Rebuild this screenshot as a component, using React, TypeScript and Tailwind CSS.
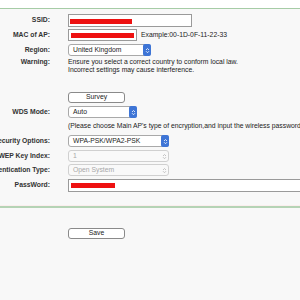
import React from "react";

function Arrows({ disabled }: { disabled?: boolean }) {
  const color = disabled ? "#b5b5b5" : "#ffffff";
  return (
    <svg width="5" height="7" viewBox="0 0 5 7">
      <path d="M1 3 L2.5 1.5 L4 3" fill="none" stroke={color} strokeWidth="0.8" />
      <path d="M1 4.2 L2.5 5.7 L4 4.2" fill="none" stroke={color} strokeWidth="0.8" />
    </svg>
  );
}

function Select({ value, width, disabled }: { value: string; width: string; disabled?: boolean }) {
  return (
    <div
      className={`flex h-full items-center justify-between rounded-[3px] border pl-[4px] ${width} ${
        disabled ? "border-[#d0d0d0] bg-[#f9f9f9] text-[#a8a8a8]" : "border-[#a9a9a9] bg-white text-[#222]"
      }`}
    >
      <span>{value}</span>
      {disabled ? (
        <span className="flex h-full w-[8px] items-center justify-center">
          <Arrows disabled />
        </span>
      ) : (
        <span className="flex h-[calc(100%+2px)] w-[8px] items-center justify-center rounded-[2px] bg-[#3e75d6] -mr-px">
          <Arrows />
        </span>
      )}
    </div>
  );
}

function Row({ label, className, children }: { label: string; className: string; children: React.ReactNode }) {
  return (
    <div className={`grid grid-cols-[50px_1fr] gap-x-[18px] ${className}`}>
      <div className="flex items-center justify-end whitespace-nowrap font-bold text-[#333]">{label}</div>
      <div className="flex items-stretch">{children}</div>
    </div>
  );
}

export default function App() {
  return (
    <div
      className="h-[300px] w-[300px] overflow-hidden bg-[#f8f8f8] text-[6.8px] leading-none text-[#222]"
      style={{ fontFamily: '"Liberation Sans", Arial, sans-serif' }}
    >
      <div className="h-[9px] bg-white border-b border-[#a6cca6]" />

      <Row label="SSID:" className="mt-[5px] h-[13px]">
        <div className="flex w-[124px] items-center border border-[#9a9a9a] bg-white pl-[1px]">
          <div className="mt-[1px] h-[5px] w-[62px] bg-[#ee1111]" />
        </div>
      </Row>

      <Row label="MAC of AP:" className="mt-[2px] h-[12px]">
        <div className="flex w-[69px] items-center border border-[#9a9a9a] bg-white pl-[2px]">
          <div className="h-[5px] w-[63px] bg-[#ee1111]" />
        </div>
        <span className="ml-[4px] self-center whitespace-nowrap">Example:00-1D-0F-11-22-33</span>
      </Row>

      <Row label="Region:" className="mt-[3px] h-[12px]">
        <Select value="United Kingdom" width="w-[83px]" />
      </Row>

      <div className="mt-[2px] grid h-[16px] grid-cols-[50px_1fr] gap-x-[18px]">
        <div className="flex h-[8px] items-center justify-end font-bold text-[#333]">Warning:</div>
        <div className="whitespace-nowrap leading-[8px]">
          <div>Ensure you select a correct country to conform local law.</div>
          <div>Incorrect settings may cause interference.</div>
        </div>
      </div>

      <div className="mt-[18px] grid h-[11px] grid-cols-[50px_1fr] gap-x-[18px]">
        <div />
        <button className="flex w-[57px] items-center justify-center rounded-[3px] border border-[#8a8a8a] bg-white text-[#222]">
          Survey
        </button>
      </div>

      <Row label="WDS Mode:" className="mt-[3px] h-[12px]">
        <Select value="Auto" width="w-[69px]" />
      </Row>

      <div className="mt-[3px] grid h-[10px] grid-cols-[50px_1fr] gap-x-[18px]">
        <div />
        <div className="flex items-center whitespace-nowrap">
          (Please choose Main AP's type of encryption,and input the wireless password
        </div>
      </div>

      <Row label="Security Options:" className="mt-[4px] h-[12px]">
        <Select value="WPA-PSK/WPA2-PSK" width="w-[101px]" />
      </Row>

      <Row label="WEP Key Index:" className="mt-[3px] h-[12px]">
        <Select value="1" width="w-[101px]" disabled />
      </Row>

      <Row label="Authentication Type:" className="mt-[2px] h-[12px]">
        <Select value="Open System" width="w-[101px]" disabled />
      </Row>

      <Row label="PassWord:" className="mt-[3px] h-[13px]">
        <div className="flex w-[260px] items-center border border-[#9a9a9a] bg-white pl-[2px]">
          <div className="h-[5px] w-[44px] bg-[#ee1111]" />
        </div>
      </Row>

      <div className="mt-[13px] h-[1px] bg-[#fbeeee]" />
      <div className="h-[2px] bg-[#b5d3b5]" />

      <div className="mt-[20px] grid h-[11px] grid-cols-[50px_1fr] gap-x-[18px]">
        <div />
        <button className="flex w-[57px] items-center justify-center rounded-[3px] border border-[#8a8a8a] bg-white text-[#222]">
          Save
        </button>
      </div>
    </div>
  );
}
